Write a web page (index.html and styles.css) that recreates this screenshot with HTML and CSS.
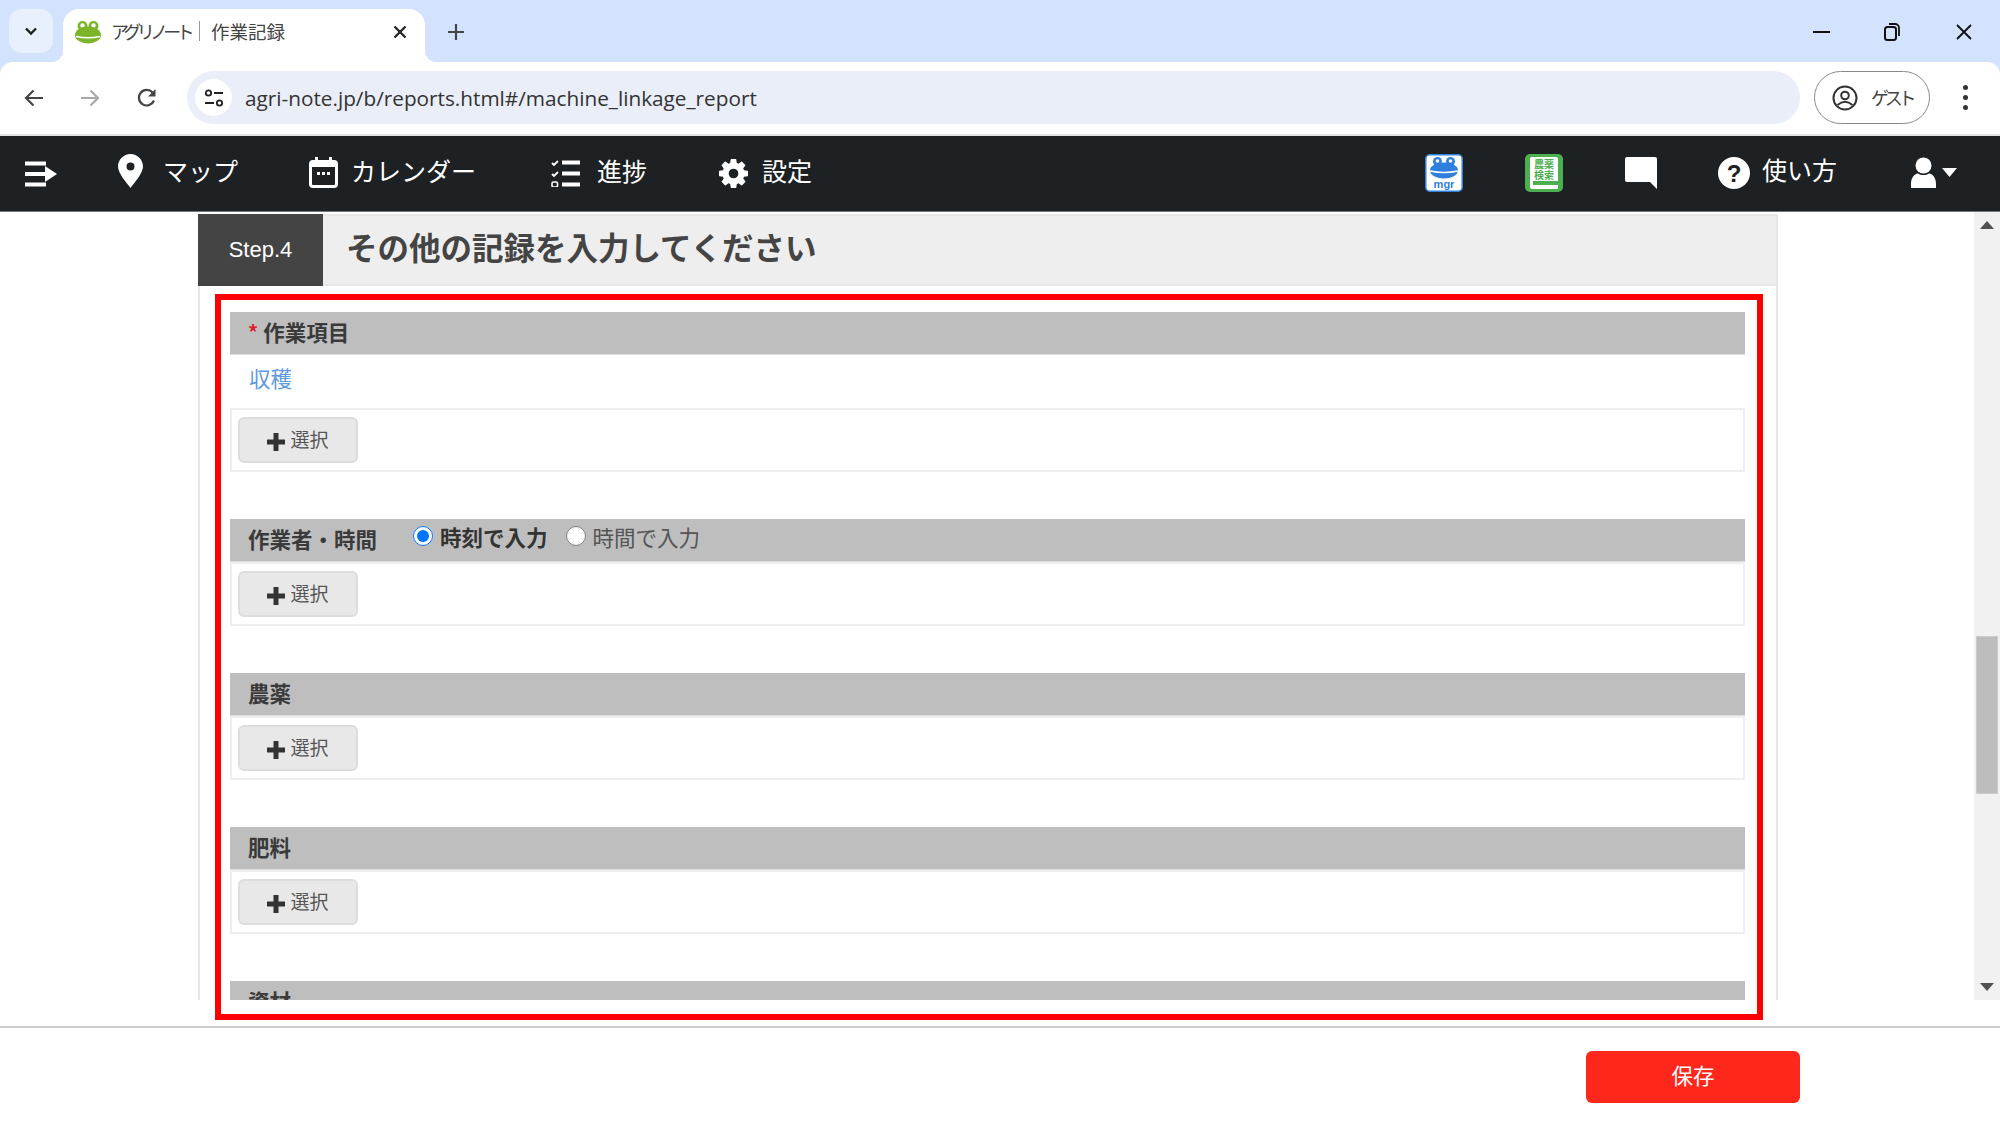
FILE: index.html
```html
<!DOCTYPE html>
<html lang="ja">
<head>
<meta charset="utf-8">
<title>アグリノート | 作業記録</title>
<link rel="stylesheet" href="styles.css">
</head>
<body>
<div class="chrome">
  <div class="tabstrip">
    <div class="tab-search">
      <svg width="14" height="9" viewBox="0 0 14 9"><path d="M2 1.500l5 5 5-5" fill="none" stroke="#1f1f1f" stroke-width="2.400"/></svg>
    </div>
    <div class="tab">
      <svg class="favicon" width="26" height="24" viewBox="0 0 26 24">
        <circle cx="7.500" cy="6" r="5" fill="#7cb52a"/><circle cx="18.500" cy="6" r="5" fill="#7cb52a"/>
        <circle cx="7.500" cy="5.500" r="2.200" fill="#fff"/><circle cx="18.500" cy="5.500" r="2.200" fill="#fff"/>
        <ellipse cx="13" cy="15" rx="13" ry="8.500" fill="#7cb52a"/>
        <path d="M1 16.500q12 2.500 24 0" fill="none" stroke="#fff" stroke-width="1.600"/>
      </svg>
      <span class="tab-title"><span class="kana">アグリノート</span><span class="tab-sep"></span>作業記録</span>
      <svg class="tab-close" width="14" height="14" viewBox="0 0 14 14"><path d="M1.500 1.500l11 11M12.500 1.500l-11 11" stroke="#1f1f1f" stroke-width="2.200"/></svg>
    </div>
    <svg class="newtab" width="18" height="18" viewBox="0 0 18 18"><path d="M9 1v16M1 9h16" stroke="#444" stroke-width="2.200"/></svg>
    <div class="winctl">
      <svg width="18" height="4" viewBox="0 0 18 4"><path d="M0 2h17" stroke="#111" stroke-width="2"/></svg>
      <svg width="16" height="18" viewBox="0 0 16 18"><rect x="1" y="4" width="11" height="13" rx="2.500" fill="none" stroke="#111" stroke-width="2"/><path d="M5 1h6a4 4 0 0 1 4 4v8" fill="none" stroke="#111" stroke-width="1.800"/></svg>
      <svg class="win-close" width="16" height="16" viewBox="0 0 16 16"><path d="M1 1l14 14M15 1L1 15" stroke="#111" stroke-width="1.900"/></svg>
    </div>
  </div>
  <div class="toolbar">
    <span class="tool">
      <svg width="20" height="18" viewBox="0 0 20 18"><path d="M19 9H2.500M9.500 1.500L2 9l7.500 7.500" fill="none" stroke="#444" stroke-width="2.200"/></svg>
    </span>
    <span class="tool">
      <svg width="20" height="18" viewBox="0 0 20 18"><path d="M1 9h16.500M10.500 1.500L18 9l-7.500 7.500" fill="none" stroke="#a9a9a9" stroke-width="2.200"/></svg>
    </span>
    <span class="tool tool-reload">
      <svg width="20" height="20" viewBox="0 0 20 20"><path d="M17 12.500A7.800 7.800 0 1 1 15.600 4.500" fill="none" stroke="#444" stroke-width="2.200"/><path d="M18.500 1v7.500H11z" fill="#444"/></svg>
    </span>
    <div class="omnibox">
      <span class="site-info">
        <svg width="20" height="18" viewBox="0 0 20 18"><circle cx="4.500" cy="4" r="2.700" fill="none" stroke="#222" stroke-width="1.800"/><path d="M10 4h9M1 14h9" stroke="#222" stroke-width="2.200"/><circle cx="15.500" cy="14" r="2.700" fill="none" stroke="#222" stroke-width="1.800"/></svg>
      </span>
      <span class="url">agri-note.jp/b/reports.html#/machine_linkage_report</span>
    </div>
    <div class="guest">
      <svg width="26" height="26" viewBox="0 0 26 26"><circle cx="13" cy="13" r="11.500" fill="none" stroke="#333" stroke-width="2"/><circle cx="13" cy="10.500" r="3.800" fill="none" stroke="#333" stroke-width="2"/><path d="M5.500 20q7.500-6.500 15 0" fill="none" stroke="#333" stroke-width="2"/></svg>
      <span class="kana-guest">ゲスト</span>
    </div>
    <span class="dots"><i></i><i></i><i></i></span>
  </div>
</div>

<nav class="appnav">
  <svg class="nav-toggle" width="32" height="26" viewBox="0 0 32 26"><path d="M0 2.500h21M0 13h22M0 23.500h21" stroke="#fff" stroke-width="4"/><path d="M20 5l12 8-12 8z" fill="#fff"/></svg>
  <a class="nav-item nav-map">
    <svg width="25" height="34" viewBox="0 0 25 34"><path fill-rule="evenodd" d="M12.500 0C5.600 0 0 5.600 0 12.500 0 19 8 28 12.500 34 17 28 25 19 25 12.500 25 5.600 19.400 0 12.500 0zm0 8.500a4 4 0 1 1 0 8 4 4 0 0 1 0-8z" fill="#fff"/></svg>
    <span>マップ</span>
  </a>
  <a class="nav-item nav-cal">
    <svg width="29" height="31" viewBox="0 0 29 31"><path fill-rule="evenodd" d="M6 0h3v3h11V0h3v3h2a4 4 0 0 1 4 4v20a4 4 0 0 1-4 4H4a4 4 0 0 1-4-4V7a4 4 0 0 1 4-4h2zM3 10v17a1 1 0 0 0 1 1h21a1 1 0 0 0 1-1V10z" fill="#fff"/><path d="M8 15h3v3H8zM13 15h3v3h-3zM18 15h3v3h-3z" fill="#fff"/></svg>
    <span>カレンダー</span>
  </a>
  <a class="nav-item nav-list">
    <svg width="29" height="27" viewBox="0 0 29 27"><path d="M11 2.500h18M11 13.500h18M11 24.500h18" stroke="#fff" stroke-width="4"/><path d="M1 3l2 2 4-4M1 14l2 2 4-4" fill="none" stroke="#fff" stroke-width="1.800"/><rect x="1" y="22" width="5.500" height="5" rx="1.500" fill="none" stroke="#fff" stroke-width="1.600"/></svg>
    <span>進捗</span>
  </a>
  <a class="nav-item nav-gear">
    <svg width="29" height="29" viewBox="128 128 1536 1536"><path fill="#fff" d="M1152 896q0-106-75-181t-181-75-181 75-75 181 75 181 181 75 181-75 75-181zm512-109v222q0 12-8 23t-20 13l-185 28q-19 54-39 91 35 50 107 138 10 12 10 25t-9 23q-27 37-99 108t-94 71q-12 0-26-9l-138-108q-44 23-91 38-16 136-29 186-7 28-36 28h-222q-14 0-24.500-8.500t-11.500-21.500l-28-184q-49-16-90-37l-141 107q-10 9-25 9-14 0-25-11-126-114-165-168-7-10-7-23 0-12 8-23 15-21 51-66.500t54-70.500q-27-50-41-99l-183-27q-13-2-21-12.500t-8-23.500v-222q0-12 8-23t19-13l186-28q14-46 39-92-40-57-107-138-10-12-10-24 0-10 9-23 26-36 98.500-107.500t94.500-71.500q13 0 26 10l138 107q44-23 91-38 16-136 29-186 7-28 36-28h222q14 0 24.500 8.500t11.500 21.500l28 184q49 16 90 37l142-107q9-9 24-9 13 0 25 10 129 119 165 170 7 8 7 22 0 12-8 23-15 21-51 66.500t-54 70.500q26 50 41 98l183 28q13 2 21 12.500t8 23.500z"/></svg>
    <span>設定</span>
  </a>
  <div class="nav-right">
    <svg class="nav-mgr" width="38" height="38" viewBox="0 0 38 38">
      <rect x="0.750" y="0.750" width="36.500" height="36.500" rx="4" fill="#fff" stroke="#2f7fde" stroke-width="1.500"/>
      <circle cx="12.500" cy="7.500" r="4.500" fill="#2f7fde"/><circle cx="25.500" cy="7.500" r="4.500" fill="#2f7fde"/>
      <circle cx="12.500" cy="7" r="1.800" fill="#fff"/><circle cx="25.500" cy="7" r="1.800" fill="#fff"/>
      <ellipse cx="19" cy="16.500" rx="14" ry="8" fill="#2f7fde"/>
      <path d="M5 17q14 3 28 0" fill="none" stroke="#fff" stroke-width="1.500"/>
      <text class="mgr-text" x="19" y="34" text-anchor="middle">mgr</text>
    </svg>
    <svg class="nav-book" width="38" height="38" viewBox="0 0 38 38">
      <rect width="38" height="38" rx="5" fill="#4caf50"/>
      <path d="M7 3h24a2 2 0 0 1 2 2v29a1 1 0 0 1-1 1H7a2 2 0 0 1-2-2V5a2 2 0 0 1 2-2z" fill="#fff"/>
      <rect x="8" y="27" width="25" height="4" fill="#4caf50"/>
      <text class="book-text" text-anchor="middle"><tspan x="19" y="14">農薬</tspan><tspan x="19" y="24.500">検索</tspan></text>
    </svg>
    <svg class="nav-chat" width="32" height="32" viewBox="0 0 32 32"><path d="M2 0h28a2 2 0 0 1 2 2v30l-7-7H2a2 2 0 0 1-2-2V2a2 2 0 0 1 2-2z" fill="#fff"/></svg>
    <a class="nav-item nav-help">
      <svg width="32" height="32" viewBox="0 0 32 32"><circle cx="16" cy="16" r="16" fill="#fff"/><text class="help-q" x="16" y="25" text-anchor="middle">?</text></svg>
      <span>使い方</span>
    </a>
    <div class="nav-user">
      <svg width="25" height="31" viewBox="0 0 25 31"><circle cx="12.500" cy="8.500" r="8" fill="#fff"/><path d="M0 31v-4c0-6 3-10 7-10.500 3 2 8 2 11 0 4 .5 7 4.500 7 10.500v4z" fill="#fff"/></svg>
      <svg width="15" height="9" viewBox="0 0 15 9"><path d="M0 0h15L7.500 9z" fill="#fff"/></svg>
    </div>
  </div>
</nav>

<main class="main">
  <div class="viewport">
    <div class="panel">
      <header class="step-head">
        <span class="step-no">Step.4</span>
        <h2 class="step-title">その他の記録を入力してください</h2>
      </header>
      <div class="panel-body">
        <section class="sec">
          <h3 class="sec-head"><span class="req">*</span><span>作業項目</span></h3>
          <a class="value-link">収穫</a>
          <div class="sec-box"><button class="pick"><svg width="18" height="18" viewBox="0 0 18 18"><path d="M9 0v18M0 9h18" stroke="#333" stroke-width="5"/></svg><span>選択</span></button></div>
        </section>
        <section class="sec">
          <h3 class="sec-head"><span>作業者・時間</span>
            <label class="opt opt-first"><input type="radio" name="mode" checked><b>時刻で入力</b></label>
            <label class="opt"><input type="radio" name="mode"><span>時間で入力</span></label>
          </h3>
          <div class="sec-box"><button class="pick"><svg width="18" height="18" viewBox="0 0 18 18"><path d="M9 0v18M0 9h18" stroke="#333" stroke-width="5"/></svg><span>選択</span></button></div>
        </section>
        <section class="sec">
          <h3 class="sec-head"><span>農薬</span></h3>
          <div class="sec-box"><button class="pick"><svg width="18" height="18" viewBox="0 0 18 18"><path d="M9 0v18M0 9h18" stroke="#333" stroke-width="5"/></svg><span>選択</span></button></div>
        </section>
        <section class="sec">
          <h3 class="sec-head"><span>肥料</span></h3>
          <div class="sec-box"><button class="pick"><svg width="18" height="18" viewBox="0 0 18 18"><path d="M9 0v18M0 9h18" stroke="#333" stroke-width="5"/></svg><span>選択</span></button></div>
        </section>
        <section class="sec">
          <h3 class="sec-head"><span>資材</span></h3>
        </section>
      </div>
    </div>
  </div>
  <div class="scrollbar">
    <svg class="arrow" width="14" height="8" viewBox="0 0 14 8"><path d="M7 0l7 8H0z" fill="#505050"/></svg>
    <div class="track"><div class="thumb"></div></div>
    <svg class="arrow" width="14" height="8" viewBox="0 0 14 8"><path d="M0 0h14L7 8z" fill="#505050"/></svg>
  </div>
</main>

<footer class="footer"><button class="save"><span>保存</span></button></footer>
<div class="callout"></div>
</body>
</html>
```

FILE: styles.css
```css
* { box-sizing: border-box; }
html, body { margin: 0; height: 100%; overflow: hidden; }
body {
  width: 2000px;
  height: 1125px;
  display: flex;
  flex-direction: column;
  background: #fff;
  font-family: "Noto Sans CJK JP", "Liberation Sans", sans-serif;
  color: #333;
  position: relative;
}
svg { display: block; flex: none; }

/* browser chrome */
.chrome { background: #d3e3fd; height: 136px; flex: none; }
.tabstrip { height: 62px; display: flex; padding: 9px 0 0 9px; align-items: flex-start; }
.tab-search {
  width: 44px; height: 44px; border-radius: 13px; background: #e8f0fe;
  display: flex; align-items: center; justify-content: center;
}
.tab {
  position: relative;
  width: 362px; height: 53px; margin-left: 10px;
  background: #fff; border-radius: 16px 16px 0 0;
  display: flex; align-items: center; padding: 0 18px 8px 12px;
}
.tab::before, .tab::after {
  content: ""; position: absolute; bottom: 0; width: 12px; height: 12px;
}
.tab::before { left: -12px; background: radial-gradient(circle at 0 0, transparent 12px, #fff 12.500px); }
.tab::after { right: -12px; background: radial-gradient(circle at 100% 0, transparent 12px, #fff 12.500px); }
.favicon { margin-right: 10px; }
.tab-title { font-size: 18.500px; line-height: 24px; color: #444; white-space: nowrap; flex: 1; display: flex; align-items: center; padding-bottom: 2px; }
.kana { font-size: 18px; letter-spacing: -4.700px; width: 78px; display: inline-block; }
.tab-sep { width: 1px; height: 20px; background: #999; margin: 0 11px 0 10px; }
.newtab { margin: 14px 0 0 22px; }
.winctl { margin-left: auto; display: flex; align-items: center; gap: 53px; padding: 14px 28px 0 0; }
.win-close { margin-left: 3px; }
.toolbar {
  height: 74px; background: #fff; border-radius: 13px 13px 0 0;
  border-bottom: 2px solid #e3e3e3;
  display: flex; align-items: center; padding: 0 0 1px 12px;
}
.tool { width: 44px; margin-right: 12px; display: flex; justify-content: center; }
.tool-reload { padding-left: 2px; }
.omnibox {
  width: 1613px; height: 53px; margin-left: 7px; border-radius: 27px; background: #e9eef8;
  display: flex; align-items: center; padding-left: 8px; flex: none;
}
.site-info {
  width: 37px; height: 37px; border-radius: 50%; background: #fff;
  display: flex; align-items: center; justify-content: center; margin-right: 13px;
}
.url { font-family: "Open Sans", "Liberation Sans", sans-serif; font-size: 20.750px; color: #333; white-space: nowrap; }
.guest {
  width: 116px; height: 53px; margin-left: 14px; border: 1.500px solid #8a8a8a; border-radius: 27px;
  display: flex; align-items: center; padding-left: 17px; gap: 13px; flex: none;
}
.kana-guest { font-size: 18px; letter-spacing: -4.200px; color: #444; padding-bottom: 2px; }
.dots { margin-left: 33px; display: flex; flex-direction: column; gap: 5px; }
.dots i { width: 5px; height: 5px; border-radius: 50%; background: #333; display: block; }

/* app nav */
.appnav {
  height: 76px; flex: none; background: #1d2124; border-bottom: 1px solid #777;
  display: flex; align-items: center; padding-left: 25px; color: #fff; font-size: 25px;
}
.nav-item { display: flex; align-items: center; color: #fff; white-space: nowrap; }
.nav-item span { padding-bottom: 7px; }
.nav-map { margin-left: 61px; gap: 20px; }
.nav-map svg { margin-bottom: 6px; }
.nav-cal { margin-left: 71px; gap: 13px; }
.nav-cal svg { margin-bottom: 3px; }
.nav-list { margin-left: 75px; gap: 17px; }
.nav-gear { margin-left: 72px; gap: 14px; }
.nav-right { margin-left: auto; display: flex; align-items: center; padding: 0 43px 2px 0; }
.nav-book { margin-left: 62px; }
.nav-chat { margin-left: 62px; }
.nav-help { margin-left: 61px; gap: 12px; }
.nav-user { margin-left: 74px; display: flex; align-items: center; gap: 6px; }
.mgr-text { font: 700 11px "Liberation Sans", sans-serif; fill: #2f7fde; }
.book-text { font: 700 10px "Noto Sans CJK JP", sans-serif; fill: #4caf50; }
.help-q { font: 700 24px "Liberation Sans", sans-serif; fill: #1d2124; }

/* main */
.main { height: 788px; flex: none; display: flex; }
.viewport { flex: 1; overflow: hidden; padding: 2px 0 0 198px; }
.panel { width: 1580px; border: solid #e5e5e5; border-width: 0 2px; min-height: 1200px; }
.step-head { height: 72px; margin: 0 -2px; background: #eee; border: 2px solid #e6e6e6; display: flex; align-items: center; }
.step-no {
  width: 125px; height: 72px; margin: -2px 0 -2px -2px; background: #444; color: #fff;
  font: 22px/72px "Liberation Sans", sans-serif; text-align: center; flex: none;
}
.step-title { margin: 0 0 6px 23px; font-size: 31.500px; font-weight: 700; color: #444; line-height: 1; }
.panel-body { padding: 26px 31px 0 30px; }
.sec { margin-bottom: 47px; }
.sec-head {
  margin: 0; height: 43px; background: #bebebe; border-bottom: 1px solid #ddd;
  padding: 0 0 4px 18px; font-size: 21.500px; font-weight: 700; color: #3a3a3a;
  display: flex; align-items: center; white-space: nowrap;
}
.req { color: #e0202a; margin-right: 5px; font-size: 20px; }
.value-link { display: block; height: 53px; padding-left: 19px; font-size: 21.500px; line-height: 45px; color: #5c9bdc; }
.sec-box { height: 64px; border: 2px solid #eee; padding: 7px 6px; }
.pick {
  width: 120px; height: 46px; background: #e8e8e8; border: 2px solid #ddd; border-radius: 6px;
  display: flex; align-items: center; justify-content: center; gap: 5px;
  font: 19px "Noto Sans CJK JP", sans-serif; color: #555; padding: 0;
}
.pick svg { margin-top: 3px; }
.pick span { padding-bottom: 3px; }
.opt { display: flex; align-items: center; font-size: 21.500px; font-weight: 400; color: #555; margin-top: -4px; }
.opt b { color: #333; font-weight: 700; }
.opt input { width: 20px; height: 20px; margin: 0 7px 0 0; accent-color: #0075ff; }
.opt-first { margin-left: 36px; margin-right: 18px; }

.scrollbar { width: 26px; flex: none; background: #f1f1f1; display: flex; flex-direction: column; align-items: center; padding: 9px 0 9px; }
.track { flex: 1; width: 100%; padding: 407px 2px 0; }
.thumb { height: 158px; background: #bdbdbd; border: 1px solid #ccc; }

/* footer */
.footer {
  flex: none; margin-top: 26px; height: 99px; border-top: 2px solid #ccc;
  display: flex; justify-content: flex-end; padding: 23px 200px 0 0;
}
.save {
  width: 214px; height: 52px; background: #ff261c; border: 0; border-radius: 6px; color: #fff;
  font: 21.500px "Noto Sans CJK JP", sans-serif; padding: 0 0 6px;
}

/* annotation drawn over the screenshot */
.callout {
  position: absolute; left: 215px; top: 294px; width: 1548px; height: 726px;
  border: 6px solid #ff0000; pointer-events: none;
}
```
